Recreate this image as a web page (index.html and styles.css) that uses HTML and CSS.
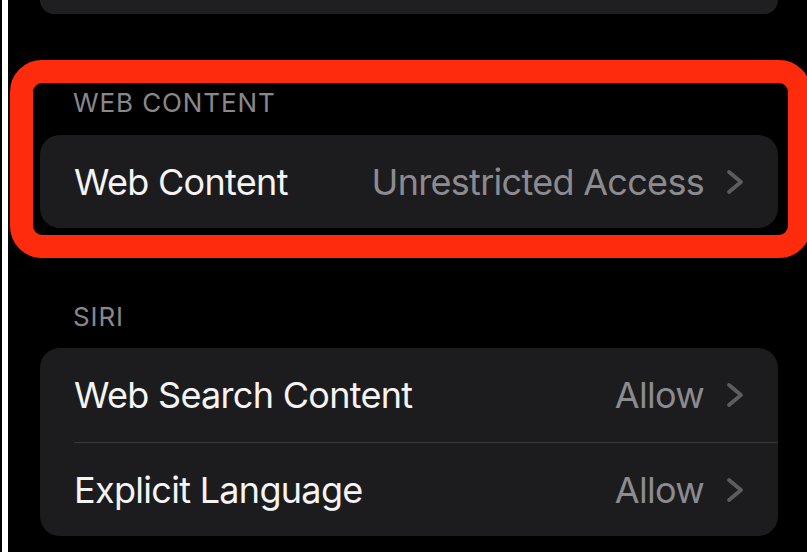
FILE: index.html
```html
<!DOCTYPE html>
<html>
<head>
<meta charset="utf-8">
<link rel="stylesheet" href="styles.css">
</head>
<body>
<div class="page">
  <div class="strip"></div>
  <main class="main">
    <div class="card card-top"></div>

    <section class="section section-web">
      <div class="section-header">WEB CONTENT</div>
      <div class="card">
        <div class="row">
          <span class="label">Web Content</span>
          <span class="value">Unrestricted Access</span>
          <svg class="chev" width="18" height="26" viewBox="0 0 18 26"><path d="M3 3 L15 13 L3 23" fill="none" stroke="#5c5c61" stroke-width="3.8" stroke-linecap="round" stroke-linejoin="round"/></svg>
        </div>
      </div>
      <div class="highlight"></div>
    </section>

    <section class="section section-siri">
      <div class="section-header">SIRI</div>
      <div class="card">
        <div class="row row-first">
          <span class="label">Web Search Content</span>
          <span class="value">Allow</span>
          <svg class="chev" width="18" height="26" viewBox="0 0 18 26"><path d="M3 3 L15 13 L3 23" fill="none" stroke="#5c5c61" stroke-width="3.8" stroke-linecap="round" stroke-linejoin="round"/></svg>
        </div>
        <div class="sep"></div>
        <div class="row">
          <span class="label">Explicit Language</span>
          <span class="value">Allow</span>
          <svg class="chev" width="18" height="26" viewBox="0 0 18 26"><path d="M3 3 L15 13 L3 23" fill="none" stroke="#5c5c61" stroke-width="3.8" stroke-linecap="round" stroke-linejoin="round"/></svg>
        </div>
      </div>
    </section>
  </main>
</div>
</body>
</html>
```

FILE: styles.css
```css
html, body {
  margin: 0;
  padding: 0;
  background: #000;
  overflow: hidden;
  height: 552px;
}
body {
  font-family: Inter, "Liberation Sans", sans-serif;
  -webkit-font-smoothing: antialiased;
}
.page {
  display: flex;
  height: 552px;
}
.strip {
  width: 6px;
  margin-left: 2px;
  background: #fff;
  flex: none;
}
.main {
  flex: 1;
  padding: 0 29px 0 32px;
  display: flex;
  flex-direction: column;
}
.card {
  background: #1c1c1e;
  border-radius: 20px;
}
.card-top {
  height: 14px;
  border-radius: 0 0 20px 20px;
  background: #1f1f21;
}
.section {
  position: relative;
}
.section-web {
  margin-top: 74px;
}
.section-siri {
  margin-top: 74px;
}
.section-header {
  font-size: 26px;
  line-height: 30px;
  color: #88888c;
  padding-left: 33px;
  margin-bottom: 17px;
  letter-spacing: 0.9px;
}
.section-siri .section-header {
  margin-bottom: 16px;
}
.row {
  display: flex;
  align-items: center;
  height: 93px;
  padding: 0 34px 0 34px;
}
.row-first {
  height: 94px;
}
.label {
  font-size: 36px;
  line-height: 44px;
  letter-spacing: -0.7px;
  color: #f4f4f5;
  flex: 1;
}
.value {
  font-size: 36px;
  line-height: 44px;
  letter-spacing: -0.7px;
  color: #8b8b90;
  margin-right: 22px;
}
.chev {
  display: block;
  flex: none;
}
.sep {
  height: 1px;
  background: #38383a;
  margin-left: 34px;
}
.highlight {
  position: absolute;
  top: -28px;
  left: -30px;
  right: -33px;
  bottom: -30px;
  border: 23px solid #fe2c0c;
  border-radius: 32px;
  pointer-events: none;
}
```
